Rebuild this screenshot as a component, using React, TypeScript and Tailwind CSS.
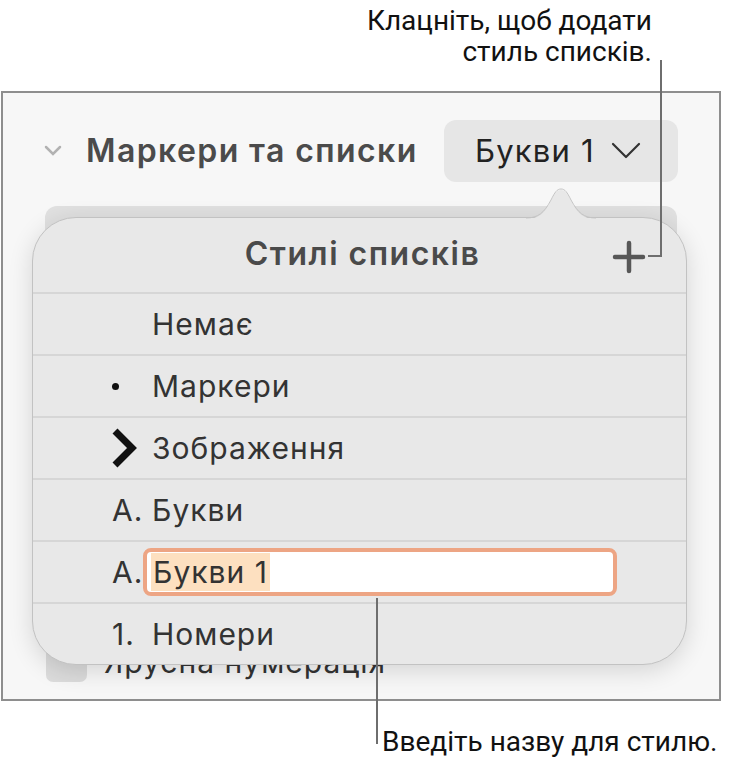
import React from "react";

const ui = "font-['Inter','Liberation_Sans',sans-serif]";
const note = "font-['Roboto','Liberation_Sans',sans-serif]";

function Marker({ kind }: { kind: string }) {
  if (kind === "dot") return <span className="block w-[7px] h-[7px] rounded-full bg-[#111]" />;
  if (kind === "arrow")
    return (
      <svg width="28" height="42" viewBox="0 0 28 42" className="-ml-[1px]">
        <polyline points="4,4 21,21 4,38" fill="none" stroke="#111" strokeWidth="7" strokeLinejoin="miter" />
      </svg>
    );
  if (kind === "A") return <span className="text-[30px] tracking-[1px] text-[#333]">А.</span>;
  if (kind === "1") return <span className="text-[30px] tracking-[1px] text-[#333]">1.</span>;
  return null;
}

const rows = [
  { kind: "", label: "Немає" },
  { kind: "dot", label: "Маркери" },
  { kind: "arrow", label: "Зображення" },
  { kind: "A", label: "Букви" },
  { kind: "A", label: "Букви 1", editing: true },
  { kind: "1", label: "Номери" },
];

function StylesPopover() {
  return (
    <div className="absolute left-[29px] top-[124px] w-[655px]">
      {/* arrow pointing at the button */}
      <svg width="70" height="32" viewBox="0 0 70 32" className="absolute left-[494px] -top-[29px] z-10">
        <path d="M0,31 C12,31 18,26 25,13 C29,5 31,2 35,2 C39,2 41,5 45,13 C52,26 58,31 70,31 Z" fill="#e8e8e8" />
        <path d="M0,30 C12,30 18,25 25,12 C29,4 31,1 35,1 C39,1 41,4 45,12 C52,25 58,30 70,30" fill="none" stroke="#c4c4c4" strokeWidth="1" />
      </svg>
      <div className="rounded-[44px] bg-[#e8e8e8] border border-[#c2c2c2] shadow-[0_6px_24px_rgba(0,0,0,0.14)] overflow-hidden">
        <div className="h-[74px] flex items-center justify-center relative">
          <span className="text-[32px] font-semibold tracking-[1.5px] text-[#4a4a4a] -mt-[2px] ml-[6px]">Стилі списків</span>
          <svg width="34" height="34" viewBox="0 0 34 34" className="absolute right-[40px] top-[22px]">
            <path d="M17,3 V31 M3,17 H31" stroke="#575757" strokeWidth="4.5" strokeLinecap="round" />
          </svg>
        </div>
        {rows.map((r) => (
          <div key={r.label} className="h-[62px] border-t-2 border-[#d6d6d6] flex items-center">
            <div className="w-[119px] pl-[79px] flex items-center">
              <Marker kind={r.kind} />
            </div>
            {r.editing ? (
              <div className="-ml-[9px] w-[474px] h-[48px] rounded-[8px] border-[4px] border-[#eda584] bg-white flex items-stretch pl-[4px] py-[1px]">
                <span className="text-[30px] tracking-[1px] text-[#333] bg-[#fde0c0] px-[2px] flex items-center">{r.label}</span>
              </div>
            ) : (
              <span className="text-[30px] tracking-[1px] text-[#333]">{r.label}</span>
            )}
          </div>
        ))}
      </div>
    </div>
  );
}

export default function App() {
  return (
    <div className={`w-[729px] h-[763px] bg-white relative overflow-hidden ${ui}`}>
      {/* top callout */}
      <div className={`${note} h-[91px] pt-[5px] pr-[77px] text-right text-[28px] leading-[31px] text-[#111]`}>
        <div>Клацніть, щоб додати</div>
        <div>стиль списків.</div>
      </div>
      <div className="absolute left-[660px] top-[60px] w-[2px] h-[197px] bg-[#6e6e6e] z-20" />
      <div className="absolute left-[648px] top-[255px] w-[13px] h-[2px] bg-[#6e6e6e] z-20" />

      {/* inspector panel */}
      <div className="relative ml-[1px] w-[720px] h-[610px] border-2 border-[#8e8e8e] bg-[#f7f7f7]">
        <div className="h-[90px] pt-[27px] pl-[40px] pr-[41px] flex items-start">
          <div className="h-[62px] flex items-center">
            <svg width="20" height="12" viewBox="0 0 20 12">
              <polyline points="3,2 10,9 17,2" fill="none" stroke="#b2b2b2" strokeWidth="2.5" strokeLinecap="round" />
            </svg>
            <span className="ml-[23px] text-[32px] font-semibold tracking-[1.4px] text-[#4b4b4b]">Маркери та списки</span>
          </div>
          <div className="ml-auto w-[234px] h-[62px] rounded-[12px] bg-[#e6e6e6] flex items-center pl-[31px]">
            <span className="text-[31px] tracking-[1.2px] text-[#222]">Букви 1</span>
            <svg width="32" height="20" viewBox="0 0 32 20" className="ml-[16px]">
              <polyline points="2,3 15,16 28,3" fill="none" stroke="#333" strokeWidth="2.2" strokeLinecap="round" strokeLinejoin="round" />
            </svg>
          </div>
        </div>
        {/* controls behind the popover */}
        <div className="ml-[42px] mt-[23px] w-[632px] h-[420px] rounded-[12px] bg-[#e0e0e0]" />
        <div className="ml-[43px] mt-[14px] flex items-center gap-[17px]">
          <div className="w-[41px] h-[38px] rounded-[7px] bg-[#dcdcdc]" />
          <span className="text-[30px] tracking-[1px] text-[#333]">Ярусна нумерація</span>
        </div>
        <StylesPopover />
      </div>

      {/* bottom callout */}
      <div className="absolute left-[376px] top-[598px] w-[2px] h-[146px] bg-[#6e6e6e] z-20" />
      <div className={`${note} pl-[382px] pt-[26px] text-[28px] leading-[30px] text-[#111]`}>Введіть назву для стилю.</div>
    </div>
  );
}
